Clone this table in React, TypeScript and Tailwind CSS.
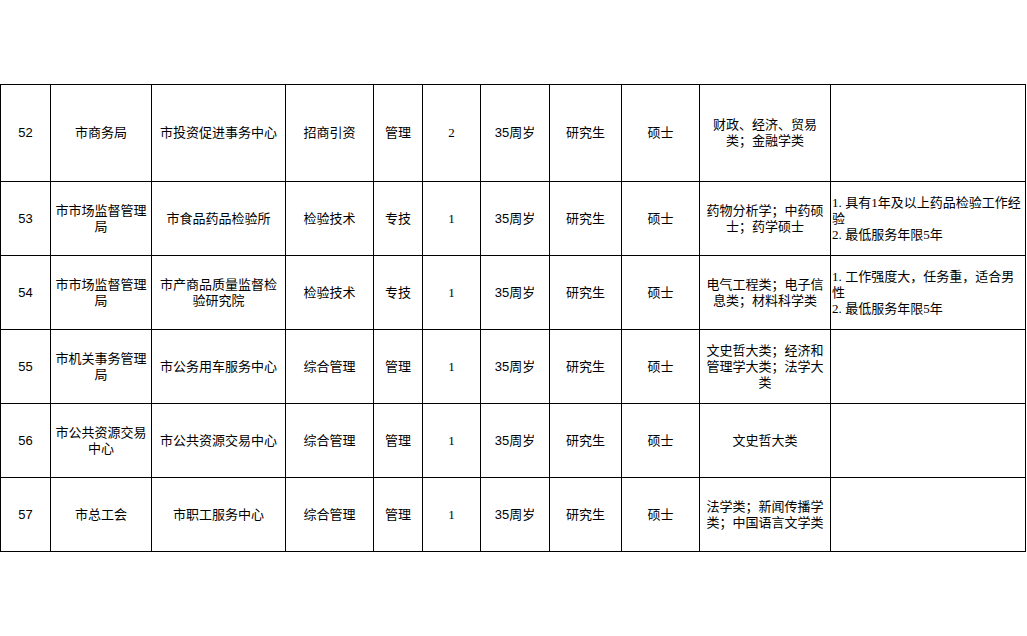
import React from "react";

type Row = {
  no: string;
  dept: string[];
  unit: string[];
  post: string;
  type: string;
  count: string;
  age: string;
  edu: string;
  degree: string;
  major: string[];
  notes: string[];
  h: string;
};

const rows: Row[] = [
  { no: "52", dept: ["市商务局"], unit: ["市投资促进事务中心"], post: "招商引资", type: "管理", count: "2", age: "35周岁", edu: "研究生", degree: "硕士", major: ["财政、经济、贸易", "类；金融学类"], notes: [], h: "h-[97px]" },
  { no: "53", dept: ["市市场监督管理", "局"], unit: ["市食品药品检验所"], post: "检验技术", type: "专技", count: "1", age: "35周岁", edu: "研究生", degree: "硕士", major: ["药物分析学；中药硕", "士；药学硕士"], notes: ["1.具有1年及以上药品检验工作经", "验", "2.最低服务年限5年"], h: "h-[74px]" },
  { no: "54", dept: ["市市场监督管理", "局"], unit: ["市产商品质量监督检", "验研究院"], post: "检验技术", type: "专技", count: "1", age: "35周岁", edu: "研究生", degree: "硕士", major: ["电气工程类；电子信", "息类；材料科学类"], notes: ["1.工作强度大，任务重，适合男", "性", "2.最低服务年限5年"], h: "h-[74px]" },
  { no: "55", dept: ["市机关事务管理", "局"], unit: ["市公务用车服务中心"], post: "综合管理", type: "管理", count: "1", age: "35周岁", edu: "研究生", degree: "硕士", major: ["文史哲大类；经济和", "管理学大类；法学大", "类"], notes: [], h: "h-[74px]" },
  { no: "56", dept: ["市公共资源交易", "中心"], unit: ["市公共资源交易中心"], post: "综合管理", type: "管理", count: "1", age: "35周岁", edu: "研究生", degree: "硕士", major: ["文史哲大类"], notes: [], h: "h-[74px]" },
  { no: "57", dept: ["市总工会"], unit: ["市职工服务中心"], post: "综合管理", type: "管理", count: "1", age: "35周岁", edu: "研究生", degree: "硕士", major: ["法学类；新闻传播学", "类；中国语言文学类"], notes: [], h: "h-[74px]" },
];

const cell = "border-r border-b border-black flex flex-col items-center justify-center text-center";

function Lines({ lines }: { lines: string[] }) {
  return (
    <>
      {lines.map((l, i) => (
        <span key={i} className="block whitespace-nowrap">
          {l}
        </span>
      ))}
    </>
  );
}

function NoteLine({ text }: { text: string }) {
  const parts = text.split(/(\.)/);
  return (
    <span className="block whitespace-nowrap">
      {parts.map((p, i) =>
        p === "." ? (
          <span key={i} className="tracking-[3.5px]">.</span>
        ) : (
          <span key={i}>{p}</span>
        )
      )}
    </span>
  );
}

export default function App() {
  return (
    <div className="w-[1027px] h-[636px] bg-white pt-[84px] overflow-hidden">
      <div
        className="grid grid-cols-[50px_101px_134px_88px_49px_58px_69px_72px_78px_131px_195px] border-l border-t border-black w-[1026px] text-[13px] leading-[16px] text-black"
        style={{ fontFamily: '"Liberation Sans", "Noto Sans CJK SC", sans-serif' }}
      >
        {rows.map((r) => (
          <React.Fragment key={r.no}>
            <div className={`${cell} ${r.h}`}>{r.no}</div>
            <div className={`${cell} ${r.h}`}><Lines lines={r.dept} /></div>
            <div className={`${cell} ${r.h}`}><Lines lines={r.unit} /></div>
            <div className={`${cell} ${r.h}`}>{r.post}</div>
            <div className={`${cell} ${r.h}`}>{r.type}</div>
            <div className={`${cell} ${r.h}`} style={{ fontFamily: '"Liberation Serif", "Noto Sans CJK SC", serif' }}>{r.count}</div>
            <div className={`${cell} ${r.h}`}>{r.age}</div>
            <div className={`${cell} ${r.h}`}>{r.edu}</div>
            <div className={`${cell} ${r.h}`}>{r.degree}</div>
            <div className={`${cell} ${r.h}`}><Lines lines={r.major} /></div>
            <div
              className={`border-r border-b border-black flex flex-col justify-center items-start text-left pl-[1px] ${r.h}`}
              style={{ fontFamily: '"Liberation Serif", "Noto Sans CJK SC", serif' }}
            >
              {r.notes.map((n, i) => (
                <NoteLine key={i} text={n} />
              ))}
            </div>
          </React.Fragment>
        ))}
      </div>
    </div>
  );
}
